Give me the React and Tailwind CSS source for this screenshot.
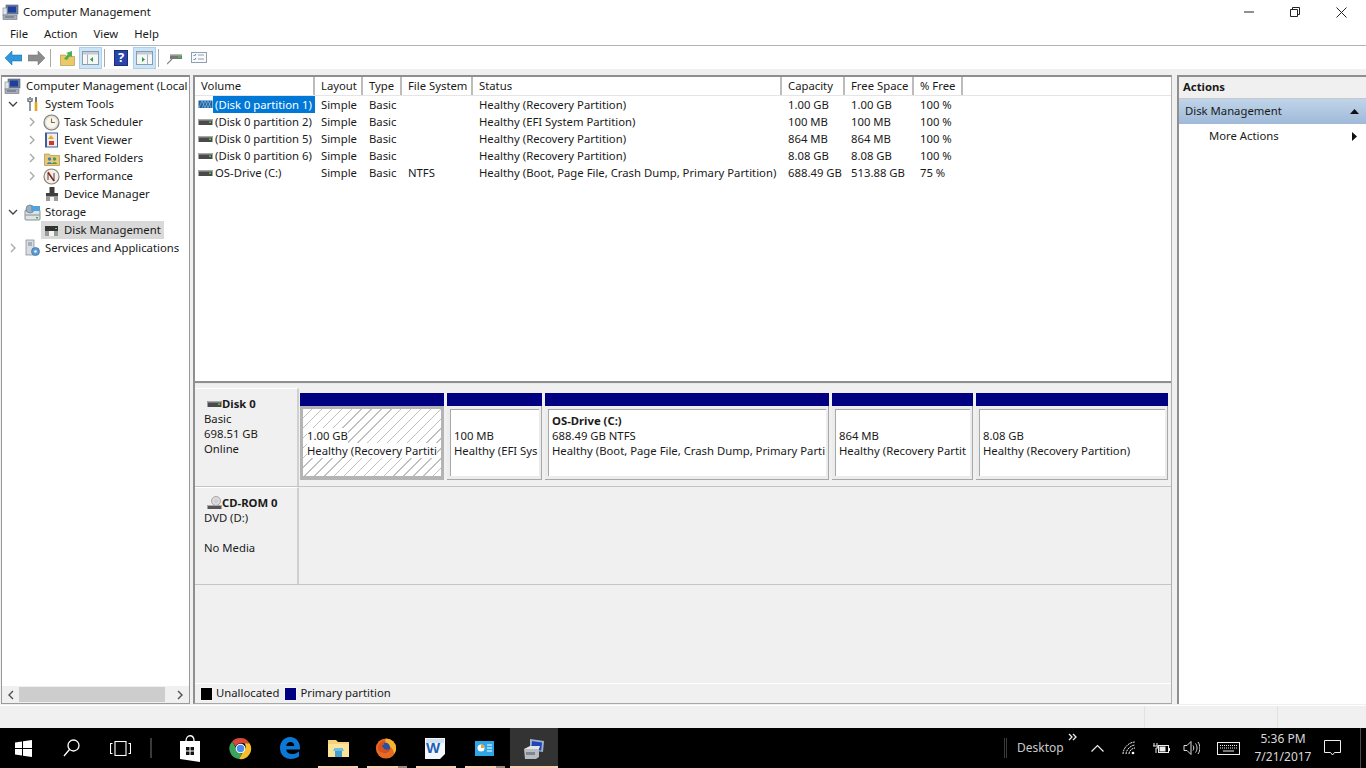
import React from "react";

const volumes = [
  { name: "(Disk 0 partition 1)", fs: "", status: "Healthy (Recovery Partition)", cap: "1.00 GB", free: "1.00 GB", pct: "100 %", selected: true },
  { name: "(Disk 0 partition 2)", fs: "", status: "Healthy (EFI System Partition)", cap: "100 MB", free: "100 MB", pct: "100 %" },
  { name: "(Disk 0 partition 5)", fs: "", status: "Healthy (Recovery Partition)", cap: "864 MB", free: "864 MB", pct: "100 %" },
  { name: "(Disk 0 partition 6)", fs: "", status: "Healthy (Recovery Partition)", cap: "8.08 GB", free: "8.08 GB", pct: "100 %" },
  { name: "OS-Drive (C:)", fs: "NTFS", status: "Healthy (Boot, Page File, Crash Dump, Primary Partition)", cap: "688.49 GB", free: "513.88 GB", pct: "75 %" },
];

const headers = ["Volume", "Layout", "Type", "File System", "Status", "Capacity", "Free Space", "% Free"];

function Chevron({ open }) {
  return (
    <svg width="10" height="10" viewBox="0 0 10 10" fill="none" stroke={open ? "#404040" : "#a6a6a6"} strokeWidth="1.3">
      {open ? <path d="M1 3l4 4 4-4" /> : <path d="M3 1l4 4-4 4" />}
    </svg>
  );
}

function DriveIcon({ hatched }) {
  if (hatched) {
    return (
      <svg width="15" height="9" viewBox="0 0 15 9" className="shrink-0">
        <rect x="0.5" y="0.5" width="14" height="7.5" fill="#1d5f9c" />
        <path d="M1 8l3-7.500M4 8l3-7.500M7 8l3-7.500M10 8l3-7.500M4 .5l3 7.500M7 .5l3 7.500M10 .5l3 7.500" stroke="#9ccbf0" strokeWidth="0.6" />
      </svg>
    );
  }
  return (
    <svg width="15" height="8" viewBox="0 0 15 8" className="shrink-0">
      <rect x="0.5" y="1" width="14" height="6" fill="#4a4a4a" />
      <rect x="0.5" y="1" width="14" height="1.5" fill="#a8a8a8" />
      <rect x="11" y="3.500" width="2" height="1.500" fill="#40d040" />
    </svg>
  );
}

function ComputerIcon() {
  return (
    <svg width="17" height="17" viewBox="0 0 17 17">
      <rect x="4" y="1" width="12" height="9" fill="#6d7f99" stroke="#55617a" strokeWidth="0.6" />
      <rect x="6" y="2.5" width="8" height="6" fill="#1e3f9e" />
      <rect x="1" y="4" width="4" height="7" fill="#dfe3ea" stroke="#7b8596" strokeWidth="0.6" />
      <rect x="1" y="11" width="14" height="4.5" fill="#a8aeb8" stroke="#6b7280" strokeWidth="0.6" />
      <path d="M3 13h9" stroke="#5a6170" />
    </svg>
  );
}

function ToolsIcon() {
  return (
    <svg width="14" height="17" viewBox="0 0 14 17" fill="none">
      <path d="M4 1v3M2 2v3l2 1 2-1V2M4 6v9" stroke="#6f7782" strokeWidth="1.5" />
      <path d="M10 1v5" stroke="#777" strokeWidth="2" />
      <path d="M10 6v9" stroke="#e5a51a" strokeWidth="2.6" />
    </svg>
  );
}

function ClockIcon() {
  return (
    <svg width="17" height="17" viewBox="0 0 17 17" fill="none">
      <circle cx="8.5" cy="8.5" r="7.5" fill="#e4e2da" stroke="#7d7d78" strokeWidth="1.2" />
      <circle cx="8.5" cy="8.5" r="5.3" fill="#f8f7f1" />
      <path d="M8.5 4.5v4h3.5" stroke="#8a6c2a" strokeWidth="1.1" />
    </svg>
  );
}

function LogIcon() {
  return (
    <svg width="15" height="16" viewBox="0 0 15 16">
      <rect x="1" y="0.5" width="13" height="15" fill="#3d5ea0" />
      <rect x="3" y="1.5" width="10" height="13" fill="#f2efe6" />
      <path d="M7 3l3 4H4z" fill="#e2ac1e" />
      <rect x="5" y="9" width="5" height="4" fill="#c83a3a" />
    </svg>
  );
}

function SharedIcon() {
  return (
    <svg width="16" height="15" viewBox="0 0 16 15">
      <path d="M0.5 3h5l1 1.5h9v10h-15z" fill="#e8c877" stroke="#b08f3d" strokeWidth="0.7" />
      <circle cx="5.5" cy="8" r="1.7" fill="#3f7fb8" />
      <path d="M3 13c0-2.5 5-2.5 5 0z" fill="#3f7fb8" />
      <circle cx="10.5" cy="8" r="1.7" fill="#4b9a52" />
      <path d="M8 13c0-2.5 5-2.5 5 0z" fill="#4b9a52" />
    </svg>
  );
}

function PerfIcon() {
  return (
    <svg width="17" height="17" viewBox="0 0 17 17" fill="none">
      <circle cx="8.5" cy="8.5" r="7.5" fill="#f4efe8" stroke="#8a8078" strokeWidth="1.2" />
      <path d="M5 4l6 9" stroke="#c8332b" strokeWidth="1.6" />
      <path d="M5 12V5l6 8V5" stroke="#333" strokeWidth="0.9" />
    </svg>
  );
}

function DeviceIcon() {
  return (
    <svg width="14" height="16" viewBox="0 0 14 16">
      <rect x="4.5" y="1" width="5" height="6" fill="#3b3b3b" />
      <rect x="1" y="7" width="12" height="8" fill="#9b9b9b" />
      <rect x="1" y="7" width="12" height="3" fill="#3f3f3f" />
      <rect x="5" y="11" width="4" height="4" fill="#f5f5f5" />
    </svg>
  );
}

function StorageIcon() {
  return (
    <svg width="17" height="17" viewBox="0 0 17 17">
      <rect x="1" y="6" width="15" height="10" rx="1" fill="#dfe3e6" stroke="#6b7680" strokeWidth="0.8" />
      <path d="M1.5 11h14" stroke="#6b7680" strokeWidth="0.8" />
      <circle cx="6" cy="5" r="4" fill="#9fb0bd" stroke="#687580" strokeWidth="0.7" />
      <rect x="7" y="2" width="9" height="5" fill="#4fa3dd" />
      <rect x="12" y="13" width="2" height="1.5" fill="#45b045" />
    </svg>
  );
}

function DiskMgmtIcon() {
  return (
    <svg width="15" height="13" viewBox="0 0 15 13">
      <rect x="1" y="2" width="13" height="5" fill="#333" />
      <rect x="1" y="7" width="13" height="5" fill="#9a9a9a" />
      <rect x="5" y="7" width="5" height="5" fill="#f5f5f5" />
      <rect x="11" y="4" width="2" height="1" fill="#58d058" />
    </svg>
  );
}

function ServicesIcon() {
  return (
    <svg width="17" height="18" viewBox="0 0 17 18">
      <rect x="2" y="1" width="8" height="15" fill="#d9dde2" stroke="#7b8390" strokeWidth="0.7" />
      <path d="M4 4h4M4 6h4" stroke="#7b8390" />
      <circle cx="11.5" cy="12.5" r="4" fill="#5a9bd0" stroke="#3b6f9d" strokeWidth="0.7" />
      <circle cx="11.5" cy="12.5" r="1.3" fill="#eaf3fa" />
    </svg>
  );
}

function TreeRow({ indent, chevron, icon, label, active }) {
  return (
    <div className={`flex items-center h-[18px] ${indent === 0 ? "pl-[2px]" : indent === 1 ? "pl-[6px]" : "pl-[25px]"}`}>
      {indent === 0 ? null : (
        <span className="w-[10px] h-[10px] mr-[6px] flex items-center shrink-0">
          {chevron ? <Chevron open={chevron === "open"} /> : null}
        </span>
      )}
      <span className={`flex items-center h-[18px] ${active ? "bg-[#d9d9d9] pr-[3px] -ml-[2px] pl-[2px]" : ""}`}>
        <span className="w-[17px] h-[18px] flex items-center justify-center shrink-0">{icon}</span>
        <span className={`${indent === 0 ? "ml-[5px]" : "ml-[4px]"} whitespace-nowrap`}>{label}</span>
      </span>
    </div>
  );
}

function Partition({ width, bold, lines, selected }) {
  return (
    <div className={`${width} flex flex-col shrink-0`}>
      <div className="h-[13px] bg-[#000080]" />
      {selected ? (
        <div className="h-[74px] border-[3px] border-b-4 border-[#b4b4b4] bg-[repeating-linear-gradient(135deg,#ffffff_0px,#ffffff_6px,#c0c0c0_6px,#c0c0c0_7px)] overflow-hidden pt-[19px] pl-[4px] leading-[15px] whitespace-nowrap">
          {lines.map((l) => (
            <div key={l} className="w-fit bg-white">{l}</div>
          ))}
        </div>
      ) : (
        <div className="h-[74px] bg-[#ececec] border-r border-b border-[#a8a8a8] pt-[3px] pl-[3px] pr-[2px]">
          <div className="h-[67px] bg-white border-l border-t border-[#a8a8a8] overflow-hidden pl-[3px] pt-[3px] leading-[15px] whitespace-nowrap">
            <div className="h-[15px] font-bold">{bold}</div>
            {lines.map((l) => (
              <div key={l}>{l}</div>
            ))}
          </div>
        </div>
      )}
    </div>
  );
}

function ToolSep() {
  return <div className="w-px h-[18px] bg-[#a8a8a8]" />;
}

function PaneIcon({ right }) {
  return (
    <svg width="17" height="14" viewBox="0 0 17 14">
      <rect x="0.5" y="0.5" width="16" height="13" fill="#f7f7f7" stroke="#8d9aa8" />
      <rect x="1" y="1" width="15" height="2.5" fill="#c2ccd6" />
      {right ? <path d="M11.5 3.500v10" stroke="#a5afb9" /> : <path d="M5.500 3.500v10" stroke="#a5afb9" />}
      {right ? <path d="M6 6v5l3-2.500z" fill="#2f9e3f" /> : <path d="M11 6v5L8 8.500z" fill="#2f9e3f" />}
    </svg>
  );
}

function TaskButton({ children, bar, tan, active }) {
  return (
    <div className={`relative h-10 flex items-center justify-center shrink-0 ${active ? "w-12 bg-[#333333]" : "w-[49px]"}`}>
      {children}
      {bar ? (
        <div className={active ? "absolute bottom-0 left-0 h-[2px] w-12 flex" : "absolute bottom-0 left-[4px] h-[2px] w-10 flex"}>
          <div className="flex-1 bg-[#f9d0b4]" />
          {tan ? <div className="w-[9px] bg-[#a08c78]" /> : null}
        </div>
      ) : null}
    </div>
  );
}

export default function App() {
  return (
    <div className="w-[1366px] h-[768px] flex flex-col overflow-hidden bg-[#f0f0f0] text-[11.3px] text-[#1a1a1a] font-['Noto_Sans',sans-serif]">
      {/* title */}
      <div className="h-[24px] bg-white flex items-center shrink-0">
        <div className="ml-[2px] w-[17px] flex items-center"><ComputerIcon /></div>
        <span className="ml-[4px]">Computer Management</span>
        <div className="ml-auto flex items-center">
          <div className="w-[46px] flex justify-center">
            <svg width="10" height="10" viewBox="0 0 10 10"><path d="M0 5h10" stroke="#222" /></svg>
          </div>
          <div className="w-[46px] flex justify-center">
            <svg width="10" height="10" viewBox="0 0 10 10" fill="none" stroke="#222"><path d="M.5 2.5h7v7h-7zM2.5 2.5v-2h7v7h-2" /></svg>
          </div>
          <div className="w-[46px] flex justify-center mr-[2px]">
            <svg width="11" height="11" viewBox="0 0 11 11" stroke="#222"><path d="M.5.5l10 10M10.5.5l-10 10" /></svg>
          </div>
        </div>
      </div>
      {/* menu */}
      <div className="h-[22px] bg-white border-b border-[#b4b4b4] flex items-center pl-[10px] gap-[16px] shrink-0">
        <span>File</span>
        <span>Action</span>
        <span>View</span>
        <span>Help</span>
      </div>
      {/* toolbar */}
      <div className="h-[23px] bg-white flex items-center shrink-0 pl-[5px]">
        <svg width="17" height="14" viewBox="0 0 17 14"><path d="M0 7l7-7v4h10v6H7v4z" fill="#2f97dc" stroke="#17689f" strokeWidth="0.5" /></svg>
        <svg className="ml-[6px]" width="17" height="14" viewBox="0 0 17 14"><path d="M17 7l-7-7v4H0v6h10v4z" fill="#8c8c8c" stroke="#6e6e6e" strokeWidth="0.5" /></svg>
        <div className="ml-[5px]"><ToolSep /></div>
        <svg className="ml-[9px]" width="15" height="16" viewBox="0 0 15 16">
          <path d="M0.5 5h5l1 1.5h8v9h-14z" fill="#ecc866" stroke="#a98a34" strokeWidth="0.6" />
          <path d="M4 9l4-5-2-1 6-2v6l-2-1-3 4z" fill="#4caf50" />
        </svg>
        <div className="ml-[4px] w-[23px] h-[22px] bg-[#cce4f7] border border-[#a9d0ee] flex items-center justify-center"><PaneIcon /></div>
        <div className="ml-[2px]"><ToolSep /></div>
        <div className="ml-[9px] w-[14px] h-[16px] bg-[#2a45a8] border border-[#1b2d78] flex items-center justify-center text-white font-bold text-[13px] leading-none">?</div>
        <div className="ml-[5px] w-[23px] h-[22px] bg-[#cce4f7] border border-[#a9d0ee] flex items-center justify-center"><PaneIcon right /></div>
        <div className="ml-[2px]"><ToolSep /></div>
        <svg className="ml-[8px]" width="16" height="14" viewBox="0 0 16 14">
          <path d="M0 13l5-5" stroke="#888" strokeWidth="1.2" />
          <rect x="3" y="3" width="12" height="5" fill="#777" />
          <rect x="3" y="3" width="12" height="1.5" fill="#bbb" />
          <rect x="11" y="5" width="3" height="2" fill="#3ec23e" />
        </svg>
        <svg className="ml-[8px]" width="16" height="11" viewBox="0 0 16 11" fill="none">
          <rect x="0.5" y="0.5" width="15" height="10" fill="#fafafa" stroke="#8fa0ae" />
          <path d="M2.5 3l1 1 1.500-2M2.500 7l1 1 1.500-2" stroke="#4a86c5" />
          <path d="M7 3h6M7 7h6" stroke="#8fa0ae" />
        </svg>
      </div>
      <div className="h-[6px] shrink-0" />

      {/* panes */}
      <div className="h-[629px] shrink-0 flex pl-[1px]">
        {/* tree */}
        <div className="w-[189px] flex flex-col bg-white border border-[#9a9a9a] border-t-2 border-t-[#8a8a8a] shrink-0 overflow-hidden">
          <div className="flex-1 overflow-hidden whitespace-nowrap">
            <TreeRow indent={0} icon={<ComputerIcon />} label="Computer Management (Local" />
            <TreeRow indent={1} chevron="open" icon={<ToolsIcon />} label="System Tools" />
            <TreeRow indent={2} chevron="closed" icon={<ClockIcon />} label="Task Scheduler" />
            <TreeRow indent={2} chevron="closed" icon={<LogIcon />} label="Event Viewer" />
            <TreeRow indent={2} chevron="closed" icon={<SharedIcon />} label="Shared Folders" />
            <TreeRow indent={2} chevron="closed" icon={<PerfIcon />} label="Performance" />
            <TreeRow indent={2} icon={<DeviceIcon />} label="Device Manager" />
            <TreeRow indent={1} chevron="open" icon={<StorageIcon />} label="Storage" />
            <TreeRow indent={2} icon={<DiskMgmtIcon />} label="Disk Management" active />
            <TreeRow indent={1} chevron="closed" icon={<ServicesIcon />} label="Services and Applications" />
          </div>
          <div className="h-[17px] bg-[#f0f0f0] flex items-center shrink-0">
            <div className="w-[17px] flex justify-center">
              <svg width="8" height="10" viewBox="0 0 8 10" fill="none" stroke="#505050" strokeWidth="1.4"><path d="M6 1L2 5l4 4" /></svg>
            </div>
            <div className="w-[146px] h-[15px] bg-[#cdcdcd]" />
            <div className="flex-1 flex justify-center pl-[5px]">
              <svg width="8" height="10" viewBox="0 0 8 10" fill="none" stroke="#505050" strokeWidth="1.4"><path d="M2 1l4 4-4 4" /></svg>
            </div>
          </div>
        </div>

        {/* center */}
        <div className="w-[979px] ml-[3px] flex flex-col border-2 border-[#8f8f8f] border-r border-b border-r-[#b0b0b0] border-b-[#a8a8a8] shrink-0">
          <div className="h-[304px] bg-white shrink-0 flex flex-col">
            <div className="h-[19px] grid grid-cols-[120px_48px_39px_71px_309px_63px_69px_49px_1fr] bg-white border-b border-[#e5e5e5]">
              {headers.map((h) => (
                <div key={h} className="border-r-2 border-[#bcbcbc] pl-[6px] leading-[18px] whitespace-nowrap overflow-hidden">{h}</div>
              ))}
              <div />
            </div>
            {volumes.map((v) => (
              <div key={v.name} className="h-[17px] grid grid-cols-[120px_48px_39px_71px_309px_63px_69px_49px_1fr] leading-[17px] whitespace-nowrap">
                <div className="flex items-center pl-[3px]">
                  <DriveIcon hatched={v.selected} />
                  <span className={v.selected ? "flex-1 bg-[#0078d7] text-white pl-[2px]" : "pl-[2px]"}>{v.name}</span>
                </div>
                <div className="pl-[6px]">Simple</div>
                <div className="pl-[6px]">Basic</div>
                <div className="pl-[6px]">{v.fs}</div>
                <div className="pl-[6px]">{v.status}</div>
                <div className="pl-[6px]">{v.cap}</div>
                <div className="pl-[6px]">{v.free}</div>
                <div className="pl-[6px]">{v.pct}</div>
                <div />
              </div>
            ))}
          </div>
          <div className="h-[3px] bg-[#8f8f8f] border-b border-[#e8e8e8] shrink-0" />
          <div className="flex-1 flex flex-col">
            <div className="h-[4px] shrink-0" />
            {/* disk 0 */}
            <div className="h-[99px] flex border-b border-[#c4c4c4] shrink-0">
              <div className="w-[104px] border-t border-white border-r-2 border-r-[#d0d0d0] pl-[9px] pt-[7px] leading-[15px] shrink-0">
                <div className="flex items-center font-bold h-[15px] pl-[3px]"><DriveIcon /><span>Disk 0</span></div>
                <div>Basic</div>
                <div>698.51 GB</div>
                <div>Online</div>
              </div>
              <div className="flex gap-[3px] pl-[1px] pt-[5px]">
                <Partition width="w-[144px]" selected lines={["1.00 GB", "Healthy (Recovery Partiti"]} />
                <Partition width="w-[95px]" lines={["100 MB", "Healthy (EFI Sys"]} />
                <Partition width="w-[284px]" bold="OS-Drive  (C:)" lines={["688.49 GB NTFS", "Healthy (Boot, Page File, Crash Dump, Primary Parti"]} />
                <Partition width="w-[141px]" lines={["864 MB", "Healthy (Recovery Partit"]} />
                <Partition width="w-[192px]" lines={["8.08 GB", "Healthy (Recovery Partition)"]} />
              </div>
            </div>
            {/* cd rom */}
            <div className="h-[98px] flex border-b border-[#c4c4c4] shrink-0">
              <div className="w-[104px] border-t border-white border-r-2 border-r-[#d0d0d0] pl-[9px] pt-[7px] leading-[15px] shrink-0">
                <div className="flex items-center font-bold h-[15px] pl-[3px]">
                  <svg width="15" height="14" viewBox="0 0 15 14" className="shrink-0">
                    <circle cx="9" cy="5" r="4.5" fill="#dcdcdc" stroke="#8a8a8a" strokeWidth="0.7" />
                    <circle cx="9" cy="5" r="1.2" fill="#fff" stroke="#8a8a8a" strokeWidth="0.5" />
                    <rect x="0.5" y="9" width="14" height="4" fill="#555" />
                    <rect x="0.5" y="9" width="14" height="1" fill="#aaa" />
                  </svg>
                  <span>CD-ROM 0</span>
                </div>
                <div>DVD (D:)</div>
                <div className="h-[15px]" />
                <div>No Media</div>
              </div>
            </div>
            <div className="flex-1" />
            {/* legend */}
            <div className="h-[20px] flex items-center pl-[5px] border-t border-white shrink-0">
              <div className="w-[13px] h-[14px] bg-black border border-[#f5f5f5]" />
              <span className="ml-[3px]">Unallocated</span>
              <div className="ml-[5px] w-[13px] h-[14px] bg-[#000080] border border-[#f5f5f5]" />
              <span className="ml-[3px]">Primary partition</span>
            </div>
          </div>
        </div>

        {/* actions */}
        <div className="w-[189px] ml-[5px] flex flex-col bg-white border-l-2 border-t-2 border-[#8f8f8f] shrink-0">
          <div className="h-[22px] bg-[#f0f0f0] border-b border-[#c8c8c8] flex items-center pl-[4px] font-bold">Actions</div>
          <div className="h-[25px] bg-gradient-to-b from-[#c0d5ea] to-[#9fb9d8] flex items-center pl-[6px] pr-[7px] justify-between">
            <span>Disk Management</span>
            <svg width="9" height="5" viewBox="0 0 9 5"><path d="M0 5l4.5-5L9 5z" fill="#111" /></svg>
          </div>
          <div className="h-[24px] flex items-center pl-[30px] pr-[9px] justify-between">
            <span>More Actions</span>
            <svg width="5" height="9" viewBox="0 0 5 9"><path d="M0 0l5 4.5L0 9z" fill="#111" /></svg>
          </div>
        </div>
      </div>

      {/* status bar */}
      <div className="h-[23px] flex shrink-0 border-t border-white mt-[1px]">
        <div className="w-[1145px] border-r border-[#e2e2e2]" />
        <div className="w-[133px] border-r border-[#e2e2e2]" />
      </div>

      {/* taskbar */}
      <div className="h-10 bg-black flex items-center text-[#e8e8e8] shrink-0">
        <div className="w-[46px] flex justify-center">
          <svg width="17" height="17" viewBox="0 0 17 17" fill="#fff"><path d="M0 2.4l7-1v6.6H0zM8 1.2L17 0v8H8zM0 9h7v6.6l-7-1zM8 9h9v8l-9-1.2z" /></svg>
        </div>
        <div className="w-[50px] flex justify-center">
          <svg width="17" height="18" viewBox="0 0 17 18" fill="none" stroke="#fff" strokeWidth="1.3"><circle cx="10.5" cy="6.5" r="5.5" /><path d="M6.5 10.5L1 17" /></svg>
        </div>
        <div className="w-[49px] flex justify-center">
          <svg width="21" height="15" viewBox="0 0 21 15" fill="none" stroke="#fff" strokeWidth="1.1"><rect x="5" y="0.5" width="11" height="14" /><path d="M2.5 2.5H.5v10h2M18.5 2.5h2v10h-2" /></svg>
        </div>
        <div className="ml-[5px] w-[2px] h-[20px] bg-[#3a3a3a]" />
        <div className="w-[15px]" />
        <TaskButton>
          <svg width="22" height="27" viewBox="0 0 22 27" className="mr-[3px]">
            <path d="M1 6h20v21L1 24z" fill="#fff" />
            <path d="M7 6c0-7 8-7 8 0" fill="none" stroke="#fff" strokeWidth="1.3" />
            <path d="M7 12h3.5v3.5H7zM11.5 12H15v3.5h-3.5zM7 16.5h3.5V20H7zM11.5 16.5H15V20h-3.5z" fill="#111" />
          </svg>
        </TaskButton>
        <TaskButton>
          <svg width="23" height="23" viewBox="0 0 24 24">
            <path d="M12 1a11 11 0 0 1 9.5 5.5H12a5.5 5.5 0 0 0-5.2 3.7L3.3 4.6A11 11 0 0 1 12 1z" fill="#d9483b" />
            <path d="M3.3 4.6l4.9 8.4a5.5 5.5 0 0 0 5.4 4.3L10.4 23A11 11 0 0 1 3.3 4.6z" fill="#3ba55c" />
            <path d="M21.5 6.5A11 11 0 0 1 10.4 23l4.8-8.5A5.5 5.5 0 0 0 16 6.5z" fill="#f6c02c" />
            <circle cx="12" cy="12" r="5" fill="#fff" />
            <circle cx="12" cy="12" r="3.9" fill="#4b8df0" />
          </svg>
        </TaskButton>
        <TaskButton>
          <svg width="22" height="24" viewBox="0 0 22 24">
            <path d="M11 1C5 1 1 6 1 12c0 7 5 11 11 11 3 0 6-1 8-2.5v-5c-2 1.7-4.500 2.600-7 2.600-3 0-5.500-1.600-5.800-4.600H21c.6-7-3.500-12.500-10-12.500zM7.200 10c.3-2.500 2.300-4 4.300-4 2.200 0 3.800 1.400 3.800 4z" fill="#0a78d4" />
          </svg>
        </TaskButton>
        <TaskButton bar>
          <svg width="21" height="19" viewBox="0 0 21 19">
            <path d="M0 1h8l2 2h11v15H0z" fill="#f3d27a" />
            <path d="M0 5h21v13H0z" fill="#fbe39a" />
            <path d="M7 12h7v6H7z" fill="#45a0cc" />
            <path d="M5 12h11l-1.500-3h-8z" fill="#6cc0e6" />
          </svg>
        </TaskButton>
        <TaskButton bar tan>
          <svg width="22" height="23" viewBox="0 0 24 24" className="mr-[3px]">
            <circle cx="12" cy="12" r="11" fill="#e66a22" />
            <path d="M12 1a11 11 0 0 1 11 11c0 3-1 4-2 6-1-6-4-9-9-9-2 0-3 1-3 2z" fill="#f7b32e" />
            <circle cx="11" cy="11" r="5.500" fill="#2d4f9e" />
            <path d="M3 10c2-5 6-7 9-6-2 1-3 3-2 4-3 0-3 2-1 3 1 3 5 3 7 1-1 4-6 6-9 4-3-1-4-3-4-6z" fill="#d8501c" />
          </svg>
        </TaskButton>
        <TaskButton bar>
          <svg width="22" height="23" viewBox="0 0 22 23" className="mr-[3px]">
            <path d="M1 1h20v16l-5 5H1z" fill="#f4f7fb" />
            <path d="M2 2h18v4H2z" fill="#cfe0f3" />
            <text x="2" y="16" fontSize="15" fontWeight="700" fill="#1f5fb4" fontFamily="'Liberation Sans',sans-serif">W</text>
          </svg>
        </TaskButton>
        <TaskButton bar tan>
          <svg width="19" height="15" viewBox="0 0 19 15" className="mr-[2px]">
            <rect x="0" y="0" width="19" height="15" fill="#2ea6e6" />
            <circle cx="6" cy="7" r="3.500" fill="#fff" />
            <path d="M6 7V3.500A3.500 3.500 0 0 1 9.500 7z" fill="#f4a62a" />
            <path d="M12 4h5M12 7h5M12 10h5" stroke="#fff" strokeWidth="1.200" />
          </svg>
        </TaskButton>
        <TaskButton bar active>
          <svg width="23" height="23" viewBox="0 0 23 23">
            <path d="M7 2l14 2-1 11-13-2z" fill="#9fb4cc" />
            <path d="M9 4l10 1.500-.8 8L8.300 12z" fill="#1f45b8" />
            <path d="M1 12h15v8l-3 2H2z" fill="#b7bcc2" />
            <path d="M1 12l6-3h10l-1 3z" fill="#e2e4e7" />
            <path d="M3 15h9v3H3z" fill="#80868e" />
          </svg>
        </TaskButton>

        <div className="ml-auto flex items-center h-10">
          <div className="w-[3px] h-[20px] border-x border-[#3a3a3a]" />
          <div className="ml-[10px] w-[50px] text-[#c8c8c8] text-[12px]">Desktop</div>
          <div className="w-[15px] self-start pt-[5px] pl-[1px]">
            <svg width="9" height="8" viewBox="0 0 9 8" fill="none" stroke="#eee" strokeWidth="1.300"><path d="M1 1l3 3-3 3M5 1l3 3-3 3" /></svg>
          </div>
          <div className="w-[30px] flex justify-center">
            <svg width="13" height="8" viewBox="0 0 13 8" fill="none" stroke="#eee" strokeWidth="1.200"><path d="M.5 7.500l6-6 6 6" /></svg>
          </div>
          <div className="w-[34px] flex justify-center">
            <svg width="14" height="14" viewBox="0 0 14 14" fill="none" stroke="#f0f0f0" strokeWidth="1"><path d="M1 13C1 7 7 1 13 1M4 13c0-4 5-9 9-9M7 13c0-3 3-6 6-6" strokeDasharray="2 0.7" /><circle cx="11" cy="12" r="1.300" fill="#fff" stroke="none" /></svg>
          </div>
          <div className="w-[30px] flex justify-center">
            <svg width="17" height="11" viewBox="0 0 17 11" fill="none" stroke="#eee"><path d="M1 0v3M4 0v3M0 3h5v2H3v5" strokeWidth="1" /><rect x="5.500" y="2.500" width="10" height="7" /><rect x="6.500" y="3.500" width="6" height="5" fill="#eee" stroke="none" /><path d="M16.500 5v3" /></svg>
          </div>
          <div className="w-[31px] flex justify-center">
            <svg width="17" height="14" viewBox="0 0 17 14" fill="none" stroke="#ddd" strokeWidth="1"><path d="M1 4.500h3l4-4v13l-4-4H1zM10 4.500c1 1.500 1 3.500 0 5M12.500 2.500c2 2.500 2 6.500 0 9M15 1c2.500 3.500 2.500 8.500 0 12" /></svg>
          </div>
          <div className="w-[42px] flex justify-center">
            <svg width="23" height="13" viewBox="0 0 23 13" fill="none" stroke="#eee"><rect x="0.500" y="0.500" width="22" height="12" /><path d="M3 3.500h17M3 6h17" strokeDasharray="1 1" /><path d="M6 9h11" /></svg>
          </div>
          <div className="w-[68px] text-center text-[12px] leading-[18px] text-[#d8d8d8] whitespace-nowrap">
            <div>5:36 PM</div>
            <div>7/21/2017</div>
          </div>
          <div className="w-[30px] flex justify-center">
            <svg width="17" height="16" viewBox="0 0 17 16" fill="none" stroke="#eee"><path d="M.5.500h16v12h-6l-2 2.500-2-2.500h-6z" /></svg>
          </div>
          <div className="w-[13px]" />
          <div className="w-px h-10 bg-[#4a4a4a]" />
          <div className="w-[5px]" />
        </div>
      </div>
    </div>
  );
}
